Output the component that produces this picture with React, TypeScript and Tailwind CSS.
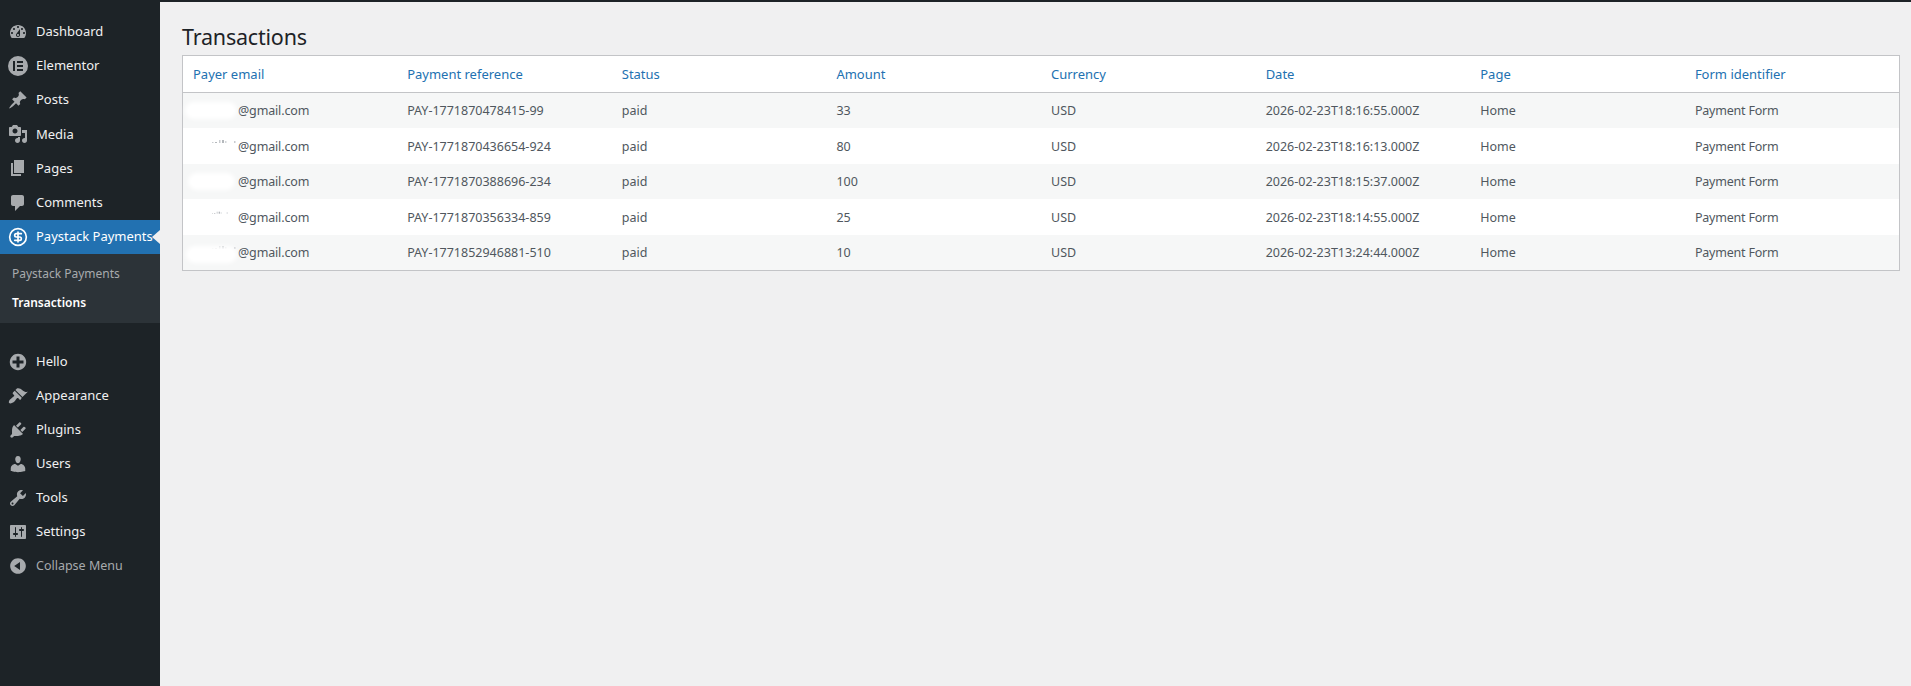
import { CircleDollarSign } from 'lucide-react'

const dash: Record<string, string> = {
  dashboard:
    'M3.76 16h12.48c1.1-1.37 1.76-3.11 1.76-5 0-4.42-3.58-8-8-8s-8 3.58-8 8c0 1.89.66 3.63 1.76 5zM10 4c.55 0 1 .45 1 1s-.45 1-1 1-1-.45-1-1 .45-1 1-1zM6 6c.55 0 1 .45 1 1s-.45 1-1 1-1-.45-1-1 .45-1 1-1zm8 0c.55 0 1 .45 1 1s-.45 1-1 1-1-.45-1-1 .45-1 1-1zm-5.37 5.55L12 7v6c0 1.1-.9 2-2 2s-2-.9-2-2c0-.57.24-1.08.63-1.45zM4 10c.55 0 1 .45 1 1s-.45 1-1 1-1-.45-1-1 .45-1 1-1zm12 0c.55 0 1 .45 1 1s-.45 1-1 1-1-.45-1-1 .45-1 1-1zm-5 3c0-.55-.45-1-1-1s-1 .45-1 1 .45 1 1 1 1-.45 1-1z',
  elementor:
    'M10 0a10 10 0 1 0 0 20 10 10 0 0 0 0-20zM7 15H5V5h2v10zm8 0H9v-2h6v2zm0-4H9V9h6v2zm0-4H9V5h6v2z',
  posts:
    'M10.44 3.02l1.82-1.82 6.36 6.35-1.83 1.82c-1.05-.68-2.48-.57-3.41.36l-.75.75c-.92.93-1.04 2.35-.35 3.41l-1.83 1.82-2.41-2.41-2.8 2.79c-.42.42-3.38 2.71-3.8 2.29s1.86-3.39 2.28-3.81l2.79-2.79L4.1 9.36l1.83-1.82c1.05.69 2.48.57 3.4-.36l.75-.75c.93-.92 1.05-2.35.36-3.41z',
  media:
    'M13 11V4c0-.55-.45-1-1-1h-1.67L9 1H5L3.67 3H2c-.55 0-1 .45-1 1v7c0 .55.45 1 1 1h10c.55 0 1-.45 1-1zM7 4.5c1.38 0 2.5 1.12 2.5 2.5S8.38 9.5 7 9.5 4.5 8.38 4.5 7 5.62 4.5 7 4.5zM14 6h5v10.5c0 1.38-1.12 2.5-2.5 2.5S14 17.88 14 16.5s1.12-2.5 2.5-2.5c.17 0 .34.02.5.05V9h-3V6zm-4 8.05V13h2v3.5c0 1.38-1.12 2.5-2.5 2.5S7 17.88 7 16.5 8.12 14 9.5 14c.17 0 .34.02.5.05z',
  pages: 'M6 15V2h10v13H6zm-1 1h8v2H3V5h2v11z',
  comments: 'M5 2h9c1.1 0 2 .9 2 2v7c0 1.1-.9 2-2 2h-2l-5 5v-5H5c-1.1 0-2-.9-2-2V4c0-1.1.9-2 2-2z',
  hello:
    'M15.8 4.2c3.2 3.21 3.2 8.39 0 11.6-3.21 3.2-8.39 3.2-11.6 0C1 12.59 1 7.41 4.2 4.2 7.41 1 12.59 1 15.8 4.2zm-4.3 11.3v-4h4v-3h-4v-4h-3v4h-4v3h4v4h3z',
  appearance:
    'M14.48 11.06L7.41 3.99l1.5-1.5c.5-.56 2.3-.47 3.51.32 1.21.8 1.43 1.28 2.91 2.1 1.18.64 2.45 1.26 4.45.85zm-.71.71L6.7 4.7 4.93 6.47c-.39.39-.39 1.02 0 1.41l1.06 1.06c.39.39.39 1.03 0 1.42-.6.6-1.43 1.11-2.21 1.69-.35.26-.7.53-1.01.84C1.43 13.23.28 16.2 1.2 17.12c.92.92 3.89-.23 5.23-1.57.31-.31.58-.66.84-1.01.58-.78 1.09-1.61 1.69-2.21.39-.39 1.02-.39 1.41 0l1.06 1.06c.39.39 1.02.39 1.41 0z',
  plugins:
    'M13.11 4.36L9.87 7.6 8 5.73l3.24-3.24c.35-.34 1.05-.2 1.56.32.52.51.66 1.21.31 1.55zm-8 1.77l.91-1.12 9.01 9.01-1.19.84c-.71.71-2.63 1.16-3.82 1.16H6.14L4.9 17.26c-.59.59-1.54.59-2.12 0-.59-.58-.59-1.53 0-2.12l1.24-1.24v-3.88c0-1.13.4-3.19 1.09-3.89zm7.26 3.97l3.24-3.24c.34-.35 1.04-.21 1.55.31.52.51.66 1.21.31 1.55l-3.24 3.25z',
  users:
    'M10 9.25c-2.27 0-2.73-3.44-2.73-3.44C7 4.02 7.82 2 9.97 2c2.16 0 2.98 2.02 2.71 3.81 0 0-.41 3.44-2.68 3.44zm0 2.57L12.72 10c2.39 0 4.52 2.33 4.52 4.53v2.49s-3.65 1.13-7.24 1.13c-3.65 0-7.24-1.13-7.24-1.13v-2.49c0-2.25 1.94-4.48 4.47-4.48z',
  tools:
    'M16.68 9.77c-1.34 1.34-3.3 1.67-4.95.99l-5.41 6.52c-.99.99-2.59.99-3.58 0s-.99-2.59 0-3.57l6.52-5.42c-.68-1.65-.35-3.61.99-4.95 1.28-1.28 3.12-1.62 4.72-1.06l-2.89 2.89 2.82 2.82 2.86-2.87c.53 1.58.18 3.39-1.08 4.65zM3.81 16.21c.4.39 1.04.39 1.43 0 .4-.4.4-1.04 0-1.43-.39-.4-1.03-.4-1.43 0-.39.39-.39 1.03 0 1.43z',
  settings:
    'M18 16V4c0-.55-.45-1-1-1H3c-.55 0-1 .45-1 1v12c0 .55.45 1 1 1h14c.55 0 1-.45 1-1zM8 11h1c.55 0 1 .45 1 1s-.45 1-1 1H8v1.5c0 .28-.22.5-.5.5s-.5-.22-.5-.5V13H6c-.55 0-1-.45-1-1s.45-1 1-1h1V5.5c0-.28.22-.5.5-.5s.5.22.5.5V11zm5-2h-1c-.55 0-1-.45-1-1s.45-1 1-1h1V5.5c0-.28.22-.5.5-.5s.5.22.5.5V7h1c.55 0 1 .45 1 1s-.45 1-1 1h-1v5.5c0 .28-.22.5-.5.5s-.5-.22-.5-.5V9z',
  collapse:
    'M10 2.16c4.33 0 7.84 3.51 7.84 7.84s-3.51 7.84-7.84 7.84S2.16 14.33 2.16 10 5.71 2.16 10 2.16zm2 11.72V6.12L6.18 9.97z',
}

function DashIcon({ name }: { name: string }) {
  return (
    <svg viewBox="0 0 20 20" fill="#a7aaad" fillRule="evenodd" className="w-5 h-5 shrink-0">
      <path d={dash[name]} />
    </svg>
  )
}

function MenuItem({ icon, label }: { icon: string; label: string }) {
  return (
    <div className="h-[34.1px] flex items-center pl-2 gap-2 text-[#f0f0f1]">
      <DashIcon name={icon} />
      <span>{label}</span>
    </div>
  )
}

// leftover specks of the redacted address
function Specks({ width }: { width: number }) {
  return (
    <svg viewBox="0 0 24 4" width={width} height={4} className="absolute left-[19px] top-[2px]">
      <rect x="0" y="2" width="1.5" height="1" fill="#c9ccd0" />
      <rect x="3" y="2" width="2" height="1" fill="#b4b8bc" />
      <rect x="7" y="0" width="1.5" height="3" fill="#c9ccd0" />
      <rect x="10" y="0" width="2" height="3" fill="#b4b8bc" />
      <rect x="13" y="1" width="1.5" height="2" fill="#d3d6d9" />
      <rect x="22" y="1" width="1.5" height="2" fill="#c9ccd0" />
    </svg>
  )
}

const topItems = [
  ['dashboard', 'Dashboard'],
  ['elementor', 'Elementor'],
  ['posts', 'Posts'],
  ['media', 'Media'],
  ['pages', 'Pages'],
  ['comments', 'Comments'],
]

const bottomItems = [
  ['hello', 'Hello'],
  ['appearance', 'Appearance'],
  ['plugins', 'Plugins'],
  ['users', 'Users'],
  ['tools', 'Tools'],
  ['settings', 'Settings'],
]

const columns = ['Payer email', 'Payment reference', 'Status', 'Amount', 'Currency', 'Date', 'Page', 'Form identifier']

const rows = [
  { ref: 'PAY-1771870478415-99', amount: '33', date: '2026-02-23T18:16:55.000Z', blob: 'left-[-8px] w-[52px]', specks: 0 },
  { ref: 'PAY-1771870436654-924', amount: '80', date: '2026-02-23T18:16:13.000Z', blob: '', specks: 24 },
  { ref: 'PAY-1771870388696-234', amount: '100', date: '2026-02-23T18:15:37.000Z', blob: 'left-[-5px] w-[47px]', specks: 0 },
  { ref: 'PAY-1771870356334-859', amount: '25', date: '2026-02-23T18:14:55.000Z', blob: '', specks: 16 },
  { ref: 'PAY-1771852946881-510', amount: '10', date: '2026-02-23T13:24:44.000Z', blob: 'left-[-7px] top-[2px] w-[51px]', specks: 24 },
]

const cell = 'px-[10px] pt-[2px] text-[#50575e]'

export default function App() {
  return (
    <div className="h-screen flex flex-col overflow-hidden bg-[#f0f0f1] text-[13px] font-['Noto_Sans',sans-serif]">
      <div className="h-0.5 bg-[#1d2327] shrink-0" />
      <div className="flex flex-1 min-h-0">
        <aside className="w-40 shrink-0 bg-[#1d2327] pt-[13px]">
          {topItems.map(([icon, label]) => (
            <MenuItem key={label} icon={icon} label={label} />
          ))}
          <div className="relative h-[34px] flex items-center pl-2 gap-2 bg-[#2271b1] text-white">
            <CircleDollarSign className="w-5 h-5 shrink-0" strokeWidth={2} />
            <span className="whitespace-nowrap">Paystack Payments</span>
            <div className="absolute right-0 top-[10px] border-y-[7px] border-r-[8px] border-y-transparent border-r-[#f0f0f1]" />
          </div>
          <div className="bg-[#2c3338] pt-[6px] pb-[5px] mb-[22px] text-[12px]">
            <div className="h-[29px] pl-3 flex items-center text-[#a7aaad]">Paystack Payments</div>
            <div className="h-[29px] pl-3 flex items-center font-semibold text-white">Transactions</div>
          </div>
          {bottomItems.map(([icon, label]) => (
            <MenuItem key={label} icon={icon} label={label} />
          ))}
          <div className="h-[34px] flex items-center pl-2 gap-2 text-[12.5px] text-[#a7aaad]">
            <DashIcon name="collapse" />
            <span>Collapse Menu</span>
          </div>
        </aside>
        <main className="flex-1 min-w-0 pl-[22px] pr-[11px] pt-[19px]">
          <h1 className="text-[21.5px] leading-[34px] tracking-[-0.2px] -mt-[1px] pb-[1px] text-[#1d2327]">Transactions</h1>
          <table className="w-full table-fixed border-collapse border border-[#c3c4c7] bg-white">
            <thead>
              <tr className="h-[37px] border-b border-[#c3c4c7]">
                {columns.map((col) => (
                  <th key={col} className="px-[10px] pt-px text-left font-normal text-[#2271b1]">
                    {col}
                  </th>
                ))}
              </tr>
            </thead>
            <tbody className="text-[12.5px]">
              {rows.map((row, i) => (
                <tr key={row.ref} className={i % 2 === 0 ? 'h-[35.6px] bg-[#f6f7f7]' : 'h-[35.6px] bg-white'}>
                  <td className={cell}>
                    <div className="relative pl-[45px] tracking-[-0.15px]">
                      @gmail.com
                      {row.specks > 0 && <Specks width={row.specks} />}
                      {row.blob && (
                        <div className={`absolute top-0 h-[17px] rounded-full bg-white blur-[2px] ${row.blob}`} />
                      )}
                    </div>
                  </td>
                  <td className={cell}>{row.ref}</td>
                  <td className={cell}>paid</td>
                  <td className={cell}>{row.amount}</td>
                  <td className={cell}>USD</td>
                  <td className={cell}>{row.date}</td>
                  <td className={cell}>Home</td>
                  <td className={`${cell} tracking-[-0.2px]`}>Payment Form</td>
                </tr>
              ))}
            </tbody>
          </table>
        </main>
      </div>
    </div>
  )
}
